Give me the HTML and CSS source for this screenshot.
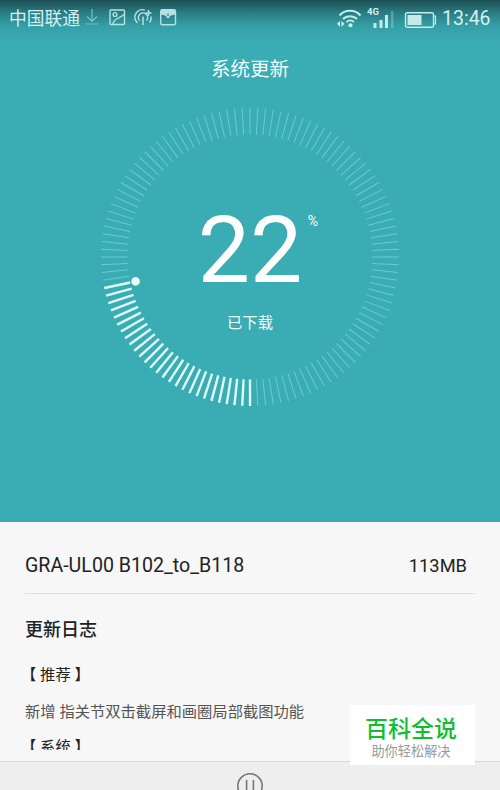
FILE: index.html
```html
<!DOCTYPE html>
<html lang="zh-CN">
<head>
<meta charset="UTF-8">
<meta name="viewport" content="width=device-width, initial-scale=1.0">
<title>系统更新</title>
<link rel="stylesheet" href="styles.css">
</head>
<body>

<div class="hero">
    <div class="statusbar">
        <span class="carrier">中国联通</span>
        <svg class="notify" width="94" height="20" viewBox="0 0 94 20">
            <!-- download -->
            <g fill="none" stroke="#6fc3c7" stroke-width="1.2">
                <path d="M8 1v12M3 8.500l5 4.800 5-4.800M1.500 16h13"/>
            </g>
            <!-- picture -->
            <g fill="none" stroke="#b4e2e4" stroke-width="1.4">
                <rect x="26" y="2" width="14.500" height="14.500" rx="1"/>
                <circle cx="31" cy="6.500" r="1.900"/>
                <path d="M29 16c0-3 2-4 4.500-5.500s5-2 6.500-4.500"/>
            </g>
            <!-- hotspot -->
            <g fill="none" stroke="#b4e2e4" stroke-width="1.500">
                <path d="M53.500 15A7.600 7.600 0 0 1 61 2.100M65.500 14.500a7.600 7.600 0 0 0 1.500-6"/>
                <path d="M55.500 12.500A4.600 4.600 0 1 1 62.500 12.500"/>
                <path d="M59 8.500V17M64.500 2v6M61.500 5h6"/>
            </g>
            <!-- app box -->
            <rect x="76.700" y="1.700" width="14.800" height="15" rx="1.500" fill="none" stroke="#b4e2e4" stroke-width="1.400"/>
            <path d="M77 2h14v4.500l-5.500 1.500v2h-3v-2l-5.500-1.500z" fill="#b4e2e4"/>
            <path d="M84 5.500v2.500" stroke="#358f96" stroke-width="1.300"/>
        </svg>
        <svg class="signals" width="100" height="26" viewBox="0 0 100 26">
            <!-- wifi -->
            <g fill="none" stroke="#c5eaeb" stroke-width="2">
                <path d="M2.500 12.500a14 14 0 0 1 21 0M6 16a10 10 0 0 1 14 0M9.500 19a5.500 5.500 0 0 1 7.500 0"/>
            </g>
            <circle cx="13.500" cy="22.300" r="2" fill="#d5f1f1"/>
            <path d="M0 20.800l3-2.900v5.800zM7.500 20.800l-3-2.900v5.800z" fill="#d5f1f1"/>
            <!-- mobile network -->
            <text class="net" x="30" y="12">4G</text>
            <g fill="#c5eaeb">
                <rect x="36.500" y="20" width="3" height="5"/>
                <rect x="42.500" y="17" width="3" height="8"/>
                <rect x="48" y="12" width="3" height="13"/>
                <rect x="54" y="8" width="2.500" height="17" opacity=".3"/>
            </g>
            <!-- battery -->
            <rect x="68.500" y="9.700" width="28" height="14.500" rx="2" fill="none" stroke="#c5eaeb" stroke-width="1.400"/>
            <rect x="70.500" y="12" width="14" height="10" fill="#c5eaeb"/>
            <path d="M97 13h1.500v8h-1.500" fill="none" stroke="#c5eaeb" stroke-width="1.200"/>
        </svg>
        <span class="clock">13:46</span>
    </div>

    <h1 class="title">系统更新</h1>

    <div class="dial">
        <svg class="ring" id="ring" width="300" height="300" viewBox="-150 -150 300 300"></svg>
        <div class="number">22<span class="percent">%</span></div>
        <div class="state">已下载</div>
    </div>
</div>

<div class="details">
    <div class="package">
        <span>GRA-UL00 B102_to_B118</span>
        <span class="size">113MB</span>
    </div>
    <div class="log">
        <h2>更新日志</h2>
        <h3>【 推荐 】</h3>
        <p>新增 指关节双击截屏和画圈局部截图功能</p>
        <h3>【 系统 】</h3>
    </div>
</div>

<div class="toolbar">
    <svg width="28" height="28" viewBox="0 0 28 28" fill="none" stroke="#777" stroke-width="1.600">
        <circle cx="14" cy="14" r="12.200"/>
        <path d="M10.600 8v12M17.400 8v12"/>
    </svg>
</div>

<div class="badge">
    <div class="badge-name">百科全说</div>
    <div class="badge-sub">助你轻松解决</div>
</div>

<script>
    // 120 ticks, one every 3 degrees, starting at the bottom and going clockwise
    var ring = document.getElementById('ring');
    var done = 27;

    function add(name, attrs) {
        var el = document.createElementNS('http://www.w3.org/2000/svg', name);
        for (var key in attrs) {
            el.setAttribute(key, attrs[key]);
        }
        ring.appendChild(el);
    }

    for (var i = 0; i < 120; i++) {
        add('line', {
            x1: 0, y1: 122.5, x2: 0, y2: 149,
            transform: 'rotate(' + i * 3 + ')',
            'class': i < done ? 'tick on' : 'tick'
        });
    }
    add('circle', { cx: 0, cy: 117, r: 4.3, fill: '#effdfc', transform: 'rotate(78)' });
</script>

</body>
</html>
```
FILE: styles.css
```css
* {
    box-sizing: border-box;
}
body {
    margin: 0;
    height: 790px;
    display: flex;
    flex-direction: column;
    overflow: hidden;
    background-color: #f7f7f7;
    font-family: Roboto, "Noto Sans CJK SC", sans-serif;
    color: #222;
}
h1, h2, h3, p {
    margin: 0;
    font-weight: normal;
}

/* top part */
.hero {
    height: 522px;
    flex: none;
    display: flex;
    flex-direction: column;
    align-items: center;
    background: linear-gradient(#1b4e52 0, #297a80 12px, #359fa6 26px, #3aacb3 42px);
    color: #f0fdfd;
}
.statusbar {
    width: 100%;
    height: 36px;
    padding: 0 9px;
    display: flex;
    align-items: center;
    color: #d4f0f1;
}
.carrier {
    padding-top: 2px;
    font-size: 17.8px;
    line-height: 34px;
}
.notify {
    margin-left: 4px;
}
.signals {
    margin-left: auto;
    margin-bottom: 5px;
}
.net {
    font-size: 9.5px;
    font-weight: bold;
    fill: #d5f1f1;
}
.clock {
    margin-left: 5px;
    width: 49px;
    padding-top: 1px;
    font-size: 19.5px;
    white-space: nowrap;
}
.title {
    margin-top: 19px;
    font-size: 19.5px;
    line-height: 30px;
}
.dial {
    width: 300px;
    height: 300px;
    margin-top: 22px;
    display: grid;
    grid-template-rows: 94px 100px 1fr;
    justify-items: center;
}
.ring {
    grid-area: 1 / 1 / 4 / 2;
}
.tick {
    stroke: #6accce;
    stroke-width: 1;
}
.tick.on {
    stroke: #dffcf9;
    stroke-width: 2.4;
}
.number {
    grid-area: 2 / 1 / 3 / 2;
    position: relative;
    font-size: 93px;
    line-height: 100px;
    color: #fff;
}
.percent {
    position: absolute;
    left: 110px;
    top: 12px;
    font-size: 14px;
    line-height: 16px;
}
.state {
    grid-area: 3 / 1 / 4 / 2;
    margin-top: 10px;
    font-size: 15.3px;
    line-height: 24px;
}

/* package and change log */
.details {
    height: 239px;
    flex: none;
    padding: 0 25px;
}
.package {
    height: 72px;
    padding: 15px 8px 0 0;
    display: flex;
    justify-content: space-between;
    align-items: center;
    border-bottom: 1px solid #dedede;
    font-size: 19.6px;
}
.size {
    font-size: 18.3px;
}
.log {
    height: 156px;
    overflow: hidden;
}
.log h2 {
    margin-top: 21px;
    font-size: 18px;
    line-height: 30px;
    font-weight: 500;
}
.log h3 {
    margin-top: 18px;
    margin-left: -4px;
    font-size: 15.3px;
    line-height: 24px;
}
.log p {
    margin-top: 13px;
    font-size: 15.3px;
    line-height: 24px;
    color: #555;
    white-space: nowrap;
}
.log p + h3 {
    margin-top: 11px;
}

.toolbar {
    height: 29px;
    flex: none;
    padding-top: 10px;
    display: flex;
    justify-content: center;
    align-items: flex-start;
    overflow: hidden;
    border-top: 1px solid #d6d6d6;
    background-color: #eee;
}
.toolbar svg {
    flex: none;
}

.badge {
    position: absolute;
    left: 350px;
    top: 705px;
    width: 125px;
    height: 60px;
    padding: 11px 3px 0 0;
    background-color: #fff;
    text-align: center;
}
.badge-name {
    font-size: 23px;
    line-height: 28px;
    font-weight: 500;
    color: #0fbf2f;
}
.badge-sub {
    font-size: 13.2px;
    line-height: 16px;
    color: #999;
}
```
